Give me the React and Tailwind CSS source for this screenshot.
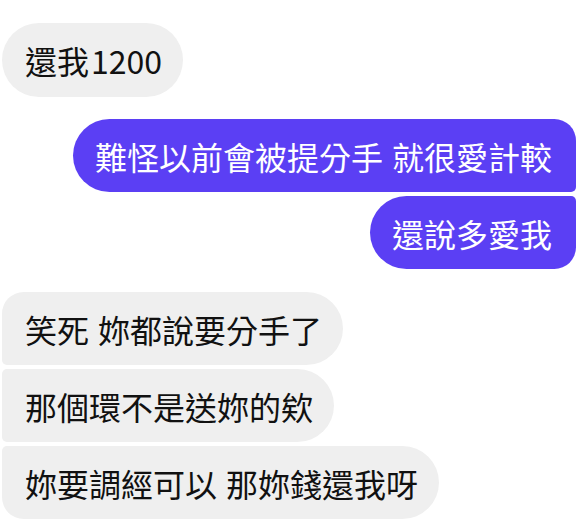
function Sp() {
  return <span className="inline-block w-[9px]">{"\u00a0"}</span>;
}

export default function App() {
  const grey = "bg-[#efefef] text-[#111111] h-[73px] flex items-center pl-[23px] pr-[21px] whitespace-nowrap";
  const purple = "bg-[#5b3ff4] text-white h-[73px] flex items-center pl-[22px] pr-[24px] whitespace-nowrap";
  return (
    <div className="w-[583px] h-[527px] bg-white overflow-hidden pt-[23px] pl-[2px] pr-[7px] font-['Noto_Sans_CJK_TC','Noto_Sans_CJK_SC',sans-serif] text-[32px] leading-none">
      <div className="flex flex-col items-start">
        <div className={`${grey} h-[74px] rounded-full`}>還我<span className="ml-[2px]">1200</span></div>
      </div>
      <div className="mt-[22px] flex flex-col items-end gap-[4px]">
        <div className={`${purple} rounded-l-[37px] rounded-tr-[22px] rounded-br-[5px]`}>難怪以前會被提分手<Sp />就很愛計較</div>
        <div className={`${purple} rounded-l-[37px] rounded-tr-[5px] rounded-br-[22px]`}>還說多愛我</div>
      </div>
      <div className="mt-[23px] flex flex-col items-start gap-[4px]">
        <div className={`${grey} rounded-r-[37px] rounded-tl-[22px] rounded-bl-[5px]`}>笑死<Sp />妳都說要分手了</div>
        <div className={`${grey} rounded-r-[37px] rounded-l-[5px]`}>那個環不是送妳的欸</div>
        <div className={`${grey} rounded-r-[37px] rounded-tl-[5px] rounded-bl-[22px]`}>妳要調經可以<Sp />那妳錢還我呀</div>
      </div>
    </div>
  );
}
